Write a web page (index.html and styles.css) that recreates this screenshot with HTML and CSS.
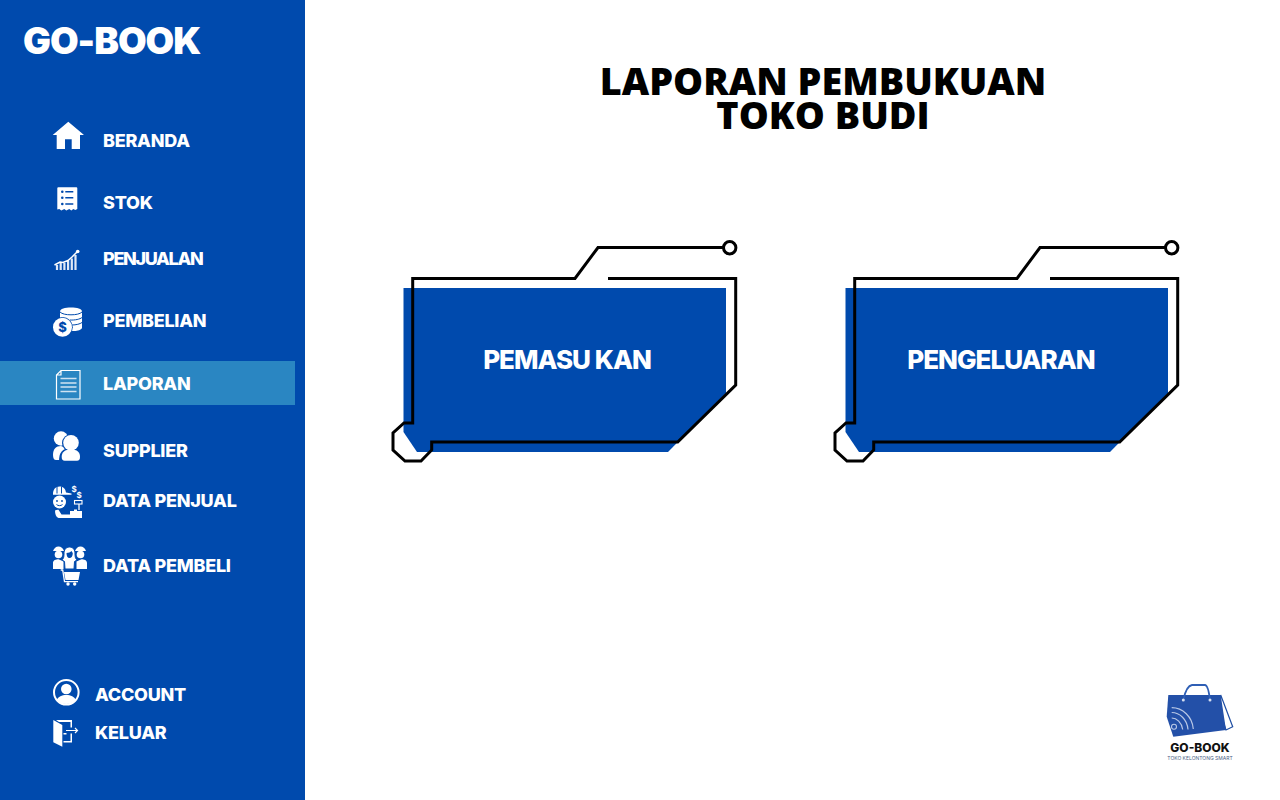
FILE: index.html
```html
<!DOCTYPE html>
<html>

<head>
  <meta charset='utf-8'>
  <title>GO-BOOK Laporan</title>
  <meta name='viewport' content='width=device-width, initial-scale=1'>
  <link rel="stylesheet" href="styles.css">
</head>

<body>

  <aside class="sidebar">
    <div class="brand">GO-BOOK</div>

    <nav class="nav">
      <a class="nav-item">
        <svg class="nav-icon" viewBox="0 0 40 44">
          <path fill="#fff" fill-rule="evenodd" d="M18.300 3.700 34 17h-4v14h-8.300v-9.700H15V31H6.700V17h-4z"/>
        </svg>
        <span>BERANDA</span>
      </a>
      <a class="nav-item">
        <svg class="nav-icon" viewBox="0 0 40 44">
          <path fill="#fff" d="M8.300 7.300h18a1 1 0 0 1 1 1V29l-2 1-2-1-2 1.500-2-1.500-3 1.500-2-1.500-3 1.500-2-1.500-2 .5V8.300a1 1 0 0 1 1-1z"/>
          <path fill="none" stroke="#004aad" stroke-width="1.500" d="M15.300 11.700h8M15.300 17.700h8M15.300 24h8"/>
          <path fill="#004aad" d="M11 11.700a1.300 1.300 0 1 0 2.600 0 1.300 1.300 0 1 0-2.600 0M11 17.700a1.300 1.300 0 1 0 2.600 0 1.300 1.300 0 1 0-2.600 0M11 24a1.300 1.300 0 1 0 2.600 0 1.300 1.300 0 1 0-2.600 0"/>
        </svg>
        <span>STOK</span>
      </a>
      <a class="nav-item">
        <svg class="nav-icon" viewBox="0 0 40 44">
          <path fill="none" stroke="#dfe8f6" stroke-width="2.200" d="M7 34v-5M10.700 34v-7M14.400 34v-7M18.100 34v-9M21.800 34V22.500M25.500 34V19"/>
          <path fill="none" stroke="#fff" stroke-width="1.500" d="m4.500 29 5.500-3 3 .5 5-2 4-3.500 5-5"/>
          <circle cx="27.700" cy="15.500" r="1.800" fill="#fff"/>
        </svg>
        <span class="label-tight">PENJUALAN</span>
      </a>
      <a class="nav-item">
        <svg class="nav-icon" viewBox="0 0 40 44">
          <path fill="#fff" d="M10 13.500c0-2.800 5-4 11-4s11 1.200 11 4v16c0 1.800-3 3-6.500 3.500H10z"/>
          <path fill="none" stroke="#004aad" stroke-width="1" d="M10 14c2 2 6 2.800 11 2.800S30 16 32 14M20 22c5 .3 10-.8 12-2.500M22 27c4 0 8-1 10-2.500"/>
          <circle cx="12.500" cy="29.300" r="10.300" fill="#004aad"/>
          <circle cx="12.500" cy="29.300" r="9.500" fill="#fff"/>
          <text class="coin-sign" x="12.500" y="33.800" text-anchor="middle">$</text>
        </svg>
        <span>PEMBELIAN</span>
      </a>
      <a class="nav-item is-active">
        <svg class="nav-icon" viewBox="0 0 40 44">
          <path fill="none" stroke="#fff" stroke-width="1.200" d="M11 9.500h19v28.500H6.500V14zM11 9.500V14H6.500"/>
          <path fill="none" stroke="#cfe3f2" stroke-width="1.400" d="M10.500 17.500h16M10.500 22h16M10.500 26h16M10.500 30.500h16"/>
        </svg>
        <span>LAPORAN</span>
      </a>
      <a class="nav-item">
        <svg class="nav-icon" viewBox="0 0 40 44">
          <circle cx="11" cy="10.500" r="7.200" fill="#fff"/>
          <path fill="#fff" d="M3 27c0-6 3-9 8-9l5 2-3 12H6c-2 0-3-2-3-5z"/>
          <circle cx="21" cy="15" r="9" fill="#004aad"/>
          <path fill="#004aad" d="M9 33c0-8 3-13 12-13s12 5 12 13z"/>
          <circle cx="21" cy="14.700" r="7.800" fill="#fff"/>
          <path fill="#fff" d="M11.700 29c0-5 3-7.500 9.300-7.500s9 2.500 9 7.500c0 2.500-1 3.700-3 3.700H14.700c-2 0-3-1.200-3-3.700z"/>
        </svg>
        <span>SUPPLIER</span>
      </a>
      <a class="nav-item">
        <svg class="nav-icon" viewBox="0 0 40 44">
          <path fill="#fff" d="M3 16c0-4.500 2.500-7.500 6.500-7.500S15.500 11 16 14.500l5.500 1v1.200H3z"/>
          <circle cx="9.500" cy="24" r="6.500" fill="#fff"/>
          <path fill="none" stroke="#004aad" stroke-width="1" d="M7 8.500v7M11.500 8.500v7"/>
          <path fill="none" stroke="#004aad" stroke-width="1" d="M6.500 26.500c1.500 1.500 4.500 1.500 6 0"/>
          <circle cx="7" cy="23" r=".9" fill="#004aad"/>
          <circle cx="12" cy="23" r=".9" fill="#004aad"/>
          <path fill="#fff" d="M5 32.500c1-.8 2.500-1 3.500-.8l3 4.800H20V40H8.500C6 39 5 36 5 32.500z"/>
          <path fill="#fff" d="M20 33h4v-1.500h3V33h5v7H20z"/>
          <path fill="none" stroke="#fff" stroke-width="1.300" d="M29 26v6"/>
          <rect x="24.500" y="22.500" width="7.500" height="3.500" fill="none" stroke="#fff" stroke-width="1.100"/>
          <text class="tiny-sign" x="24" y="14" text-anchor="middle">$</text>
          <text class="tiny-sign" x="29" y="20" text-anchor="middle">$</text>
        </svg>
        <span>DATA PENJUAL</span>
      </a>
      <a class="nav-item">
        <svg class="nav-icon" viewBox="0 0 40 44">
          <path fill="#fff" d="M3 8c1-2.500 3-4.500 5.500-4.500S13 5 14 8zM25 8c1-2.500 3-4.500 5.500-4.500S35 5 36 8z"/>
          <circle cx="8.500" cy="11.500" r="3.800" fill="#fff"/>
          <circle cx="30.500" cy="11.500" r="3.800" fill="#fff"/>
          <path fill="#fff" d="M3 26v-6c0-3 3-3.800 5.500-3.800l5 2.300v7.500zM37 26v-6c0-3-3-3.800-5.500-3.800l-5 2.300v7.500z"/>
          <path fill="#fff" stroke="#004aad" stroke-width="1" d="M19.500 4c4 0 5.500 3 5.500 7 0 4 1 5 2 6l-2.500 1.500-.5 7.500h-9l-.5-7.500L12 17c1-1 2-2 2-6 0-4 1.500-7 5.500-7z"/>
          <path fill="#004aad" d="M16.500 10c2 0 4-1 5-2 .5 1 1 1.500 1.300 2 0 3-1.300 5-3.300 5s-3-2-3-5z"/>
          <path fill="none" stroke="#fff" stroke-width="1.300" d="M10.700 27h2l1.800 11.700H28"/>
          <path fill="#fff" d="M14 29h16l-1.500 8H15.500z"/>
          <circle cx="18" cy="41" r="1.700" fill="#fff"/>
          <circle cx="24.700" cy="41" r="1.700" fill="#fff"/>
        </svg>
        <span>DATA PEMBELI</span>
      </a>
    </nav>

    <nav class="nav-bottom">
      <a class="nav-item nav-item-small">
        <svg class="nav-icon" viewBox="0 0 40 38">
          <circle cx="16.300" cy="17.300" r="12.300" fill="none" stroke="#fff" stroke-width="2"/>
          <circle cx="16.300" cy="14" r="5.300" fill="#fff"/>
          <path fill="#fff" d="M6.800 25c1.500-3.500 5-5 9.500-5s8 1.500 9.500 5c-2.500 2.700-5.800 4-9.500 4s-7-1.300-9.500-4z"/>
        </svg>
        <span>ACCOUNT</span>
      </a>
      <a class="nav-item nav-item-small">
        <svg class="nav-icon" viewBox="0 0 40 38">
          <path fill="#fff" d="M3.300 7l9 5v21.700l-9-4.500z"/>
          <path fill="#fff" d="M6 7h16v7.500h-1.500V9H9zM13.500 20h3v1.500h-3zM13.500 29.500h8.500v-9h-1.500v7.500h-7z"/>
          <path fill="none" stroke="#fff" stroke-width="1.200" d="M16 17.500h11.500M25 15l2.500 2.500L25 20"/>
        </svg>
        <span>KELUAR</span>
      </a>
    </nav>
  </aside>

  <main class="content">
    <h1 class="title">LAPORAN PEMBUKUAN<br>TOKO BUDI</h1>

    <section class="cards">
      <a class="card card-income">
        <svg class="card-shape" viewBox="0 0 360 240">
          <path fill="#004aad" d="M23.500 58H346v105l-58 59H37l-13.500-20z"/>
          <path fill="none" stroke="#000" stroke-width="3" d="M228 48.500H355.700V155L297.700 212H51.700V220L41 231H25L13 220V203L24 193H32.700V48.500H195L218 17.500H343"/>
          <circle cx="349.700" cy="17.700" r="6.200" fill="#fff" stroke="#000" stroke-width="3"/>
        </svg>
        <span class="card-label">PEMASU KAN</span>
      </a>
      <a class="card card-expense">
        <svg class="card-shape" viewBox="0 0 360 240">
          <path fill="#004aad" d="M23.500 58H346v105l-58 59H37l-13.500-20z"/>
          <path fill="none" stroke="#000" stroke-width="3" d="M228 48.500H355.700V155L297.700 212H51.700V220L41 231H25L13 220V203L24 193H32.700V48.500H195L218 17.500H343"/>
          <circle cx="349.700" cy="17.700" r="6.200" fill="#fff" stroke="#000" stroke-width="3"/>
        </svg>
        <span class="card-label">PENGELUARAN</span>
      </a>
    </section>

    <div class="logo">
      <svg class="logo-bag" viewBox="0 0 70 58">
        <path fill="#fff" stroke="#1f4ea3" stroke-width="1.200" d="M55.700 13 67.700 44.700 61 48 55 30z"/>
        <path fill="#2350a8" d="M3.300 13h52.400L61 48 8.300 54.700 1.700 34.700z"/>
        <path fill="none" stroke="#2f5fb5" stroke-width="1.800" d="M18.300 18C20 10 23 3.500 27 3h13c2.500 0 4 7 5 15"/>
        <circle cx="18.300" cy="18" r="1.500" fill="#d5def0"/>
        <circle cx="45" cy="18" r="1.500" fill="#d5def0"/>
        <path fill="none" stroke="#b9c8e6" stroke-width="1.200" d="M6.700 25.700c11 0 20.600 9 21.600 21.300M6.700 30.500c8 0 15.500 7 16.300 17M6.700 36c5 0 10 4.500 11 11.500"/>
        <circle cx="9" cy="44.700" r="2.500" fill="none" stroke="#b9c8e6" stroke-width="1.100"/>
      </svg>
      <div class="logo-name">GO-BOOK</div>
      <div class="logo-tag">TOKO KELONTONG SMART</div>
    </div>
  </main>

</body>

</html>
```

FILE: styles.css
```css
body {
  margin: 0;
  padding: 0;
  display: flex;
  height: 800px;
  overflow: hidden;
  font-family: Inter, "Liberation Sans", sans-serif;
  background-color: #fff;
}

.sidebar {
  width: 305px;
  flex: none;
  display: flex;
  flex-direction: column;
  background-color: #004aad;
  color: #fff;
}

.brand {
  height: 80px;
  padding-left: 23px;
  font-size: 37px;
  font-weight: 900;
  line-height: 82px;
  letter-spacing: -1px;
}

.nav {
  display: flex;
  flex-direction: column;
  margin-top: 38px;
}

.nav-item {
  width: 295px;
  height: 44px;
  box-sizing: border-box;
  padding-left: 50px;
  display: flex;
  align-items: center;
  gap: 13px;
  font-size: 18px;
  font-weight: 800;
  letter-spacing: -0.250px;
}

.nav-item:nth-child(2) { margin-top: 18px; }
.nav-item:nth-child(3) { margin-top: 12px; }
.nav-item:nth-child(4) { margin-top: 18px; }
.nav-item:nth-child(5) { margin-top: 19px; }
.nav-item:nth-child(6) { margin-top: 23px; }
.nav-item:nth-child(7) { margin-top: 6px; }
.nav-item:nth-child(8) { margin-top: 21px; }

.label-tight {
  letter-spacing: -1.350px;
}

.is-active {
  background-color: #2a86c2;
}

.nav-icon {
  width: 40px;
  height: 44px;
  flex: none;
}

.nav-bottom {
  margin-top: auto;
  padding-bottom: 49px;
}

.nav-item.nav-item-small {
  height: 38px;
  margin-top: 0;
  gap: 5px;
}

.nav-item-small .nav-icon {
  height: 38px;
}

.coin-sign {
  fill: #004aad;
  font-size: 13px;
  font-weight: 800;
}

.tiny-sign {
  fill: #fff;
  font-size: 8px;
  font-weight: 700;
  letter-spacing: 0;
}

.content {
  flex: 1;
  display: flex;
  flex-direction: column;
}

.title {
  margin: 64px 0 0 61px;
  font-family: "Open Sans", sans-serif;
  font-size: 37.800px;
  font-weight: 800;
  line-height: 34px;
  text-align: center;
  color: #000;
}

.cards {
  display: flex;
  gap: 82px;
  margin: 98px 0 0 75px;
}

.card {
  position: relative;
  width: 360px;
  height: 240px;
  box-sizing: border-box;
  padding-top: 18px;
  display: flex;
  align-items: center;
  justify-content: center;
}

.card-income { padding-left: 14px; }
.card-expense { padding-right: 2px; }

.card-shape {
  position: absolute;
  top: 0;
  left: 0;
  width: 360px;
  height: 240px;
}

.card-label {
  position: relative;
  font-size: 26px;
  font-weight: 800;
  letter-spacing: -1px;
  color: #fff;
}

.logo {
  margin: auto 47px 38px auto;
  width: 66px;
  display: flex;
  flex-direction: column;
  align-items: center;
}

.logo-bag {
  width: 70px;
  height: 58px;
  flex: none;
}

.logo-name {
  margin-top: 1px;
  font-size: 12px;
  font-weight: 800;
  line-height: 14px;
  color: #111;
}

.logo-tag {
  font-size: 5px;
  line-height: 7px;
  letter-spacing: 0;
  color: #4b5f86;
  white-space: nowrap;
}
```
